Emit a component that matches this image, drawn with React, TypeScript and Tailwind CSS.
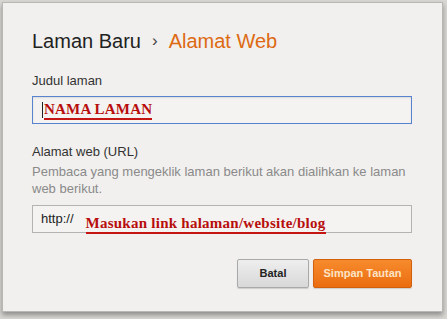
import React from "react";

const sans = { fontFamily: '"Liberation Sans", Arial, sans-serif' };
const serif = { fontFamily: '"Liberation Serif", "Times New Roman", serif' };

export default function App() {
  return (
    <div className="w-[447px] h-[319px] bg-[#d9d7d4] pt-[2px] pl-[2px] overflow-hidden" style={sans}>
      <div className="w-[441px] h-[310px] bg-[#f1f0ee] border border-[#b9b7b4] shadow-[0_3px_5px_rgba(0,0,0,0.35)] pt-[26px] px-[29px]">
        {/* judul dialog */}
        <div className="flex items-center text-[20px] leading-[24px] text-[#222]">
          <span>Laman Baru</span>
          <span className="px-[11px] text-[17px] text-[#444]">›</span>
          <span className="text-[#dd6a12]">Alamat Web</span>
        </div>

        <div className="mt-[20px] text-[13px] leading-[16px] text-[#333]">Judul laman</div>
        <div className="mt-[7px] h-[28px] w-[380px] border border-[#5783cf] bg-[#f4f3f1] flex items-center pl-[9px] shadow-[inset_0_1px_2px_rgba(0,0,0,0.1)]">
          <div className="w-px h-[16px] bg-[#222]" />
          <span
            className="ml-[1px] font-bold text-[15px] leading-[17px] tracking-[0.2px] text-[#b80d0d] border-b-2 border-[#c41414]"
            style={serif}
          >
            NAMA LAMAN
          </span>
        </div>

        <div className="mt-[20px] text-[13px] leading-[16px] text-[#333]">Alamat web (URL)</div>
        <p className="mt-[3px] text-[13px] leading-[17px] text-[#8a8a8a]">
          Pembaca yang mengeklik laman berikut akan dialihkan ke laman web berikut.
        </p>
        <div className="mt-[8px] h-[28px] w-[380px] border border-[#b3b3b3] bg-[#f4f3f1] flex items-center pl-[8px]">
          <span className="text-[13px] text-[#222]">http://</span>
          <span
            className="relative top-[5px] ml-[12px] font-bold text-[15px] leading-[17px] tracking-[0.25px] text-[#b80d0d] border-b-2 border-[#c41414]"
            style={serif}
          >
            Masukan link halaman/website/blog
          </span>
        </div>

        <div className="mt-[26px] w-[380px] flex justify-end gap-[4px]">
          <button className="h-[29px] w-[72px] rounded-[2px] border border-[#a9a9a9] bg-gradient-to-b from-[#eeeeee] to-[#d8d8d8] text-[11px] font-bold text-[#222] shadow-[0_1px_1px_rgba(0,0,0,0.15)]">
            Batal
          </button>
          <button className="h-[29px] w-[99px] rounded-[2px] border border-[#d2600c] bg-gradient-to-b from-[#f78b2c] to-[#ea6d0f] text-[11px] font-bold text-[#fde4c6] shadow-[0_1px_1px_rgba(0,0,0,0.15)]">
            Simpan Tautan
          </button>
        </div>
      </div>
    </div>
  );
}
